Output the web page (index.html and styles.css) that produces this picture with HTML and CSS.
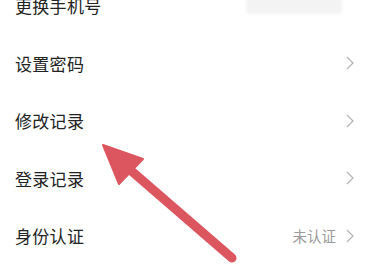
FILE: index.html
```html
<!DOCTYPE html>
<html lang="zh-CN">
<head>
  <meta charset="UTF-8" />
  <meta name="viewport" content="width=device-width, initial-scale=1.0" />
  <title>账号与安全</title>
  <link rel="stylesheet" href="styles.css">
</head>
<body>
  <div class="page">
    <ul class="menu">
      <li class="row">
        <span class="label">更换手机号</span>
        <span class="masked"></span>
      </li>
      <li class="row">
        <span class="label">设置密码</span>
        <svg class="chevron" viewBox="0 0 8 14"><polyline points="1,1 7,7 1,13" /></svg>
      </li>
      <li class="row">
        <span class="label">修改记录</span>
        <svg class="chevron" viewBox="0 0 8 14"><polyline points="1,1 7,7 1,13" /></svg>
      </li>
      <li class="row">
        <span class="label">登录记录</span>
        <svg class="chevron" viewBox="0 0 8 14"><polyline points="1,1 7,7 1,13" /></svg>
      </li>
      <li class="row">
        <span class="label">身份认证</span>
        <span class="status">未认证</span>
        <svg class="chevron" viewBox="0 0 8 14"><polyline points="1,1 7,7 1,13" /></svg>
      </li>
    </ul>

    <!-- annotation arrow drawn over the list -->
    <svg class="arrow" viewBox="0 0 367 270">
      <line x1="128" y1="168" x2="232" y2="258" />
      <polygon points="103,145 143,159 119,184" />
    </svg>
  </div>
</body>
</html>
```

FILE: styles.css
```css
html, body {
  margin: 0;
  padding: 0;
  background: #fff;
  font-family: "Noto Sans CJK SC", "Noto Sans", sans-serif;
  color: #222;
}
.page {
  position: relative;
  width: 367px;
  height: 270px;
  overflow: hidden;
}
.menu {
  list-style: none;
  margin: -23px 0 0 0;
  padding: 0;
}
.row {
  display: flex;
  align-items: center;
  height: 57.5px;
  padding: 0 13px 0 15px;
}
.label {
  flex: 1;
  font-size: 17px;
  letter-spacing: 0.3px;
}
.masked {
  width: 96px;
  height: 24px;
  margin: 0 12px 0 0;
  position: relative;
  top: -4px;
  background: #f3f3f3;
  border-radius: 2px;
  filter: blur(1.5px);
}
.status {
  font-size: 14.5px;
  color: #9a9a9a;
  margin-right: 10px;
}
.chevron {
  width: 8px;
  height: 14px;
}
.chevron polyline {
  fill: none;
  stroke: #b3b3b3;
  stroke-width: 1.2;
}
.arrow {
  position: absolute;
  left: 0;
  top: 0;
  width: 367px;
  height: 270px;
}
.arrow line {
  stroke: #dc5660;
  stroke-width: 9;
  stroke-linecap: round;
}
.arrow polygon {
  fill: #dc5660;
  stroke: #dc5660;
  stroke-width: 2;
  stroke-linejoin: round;
}
```
